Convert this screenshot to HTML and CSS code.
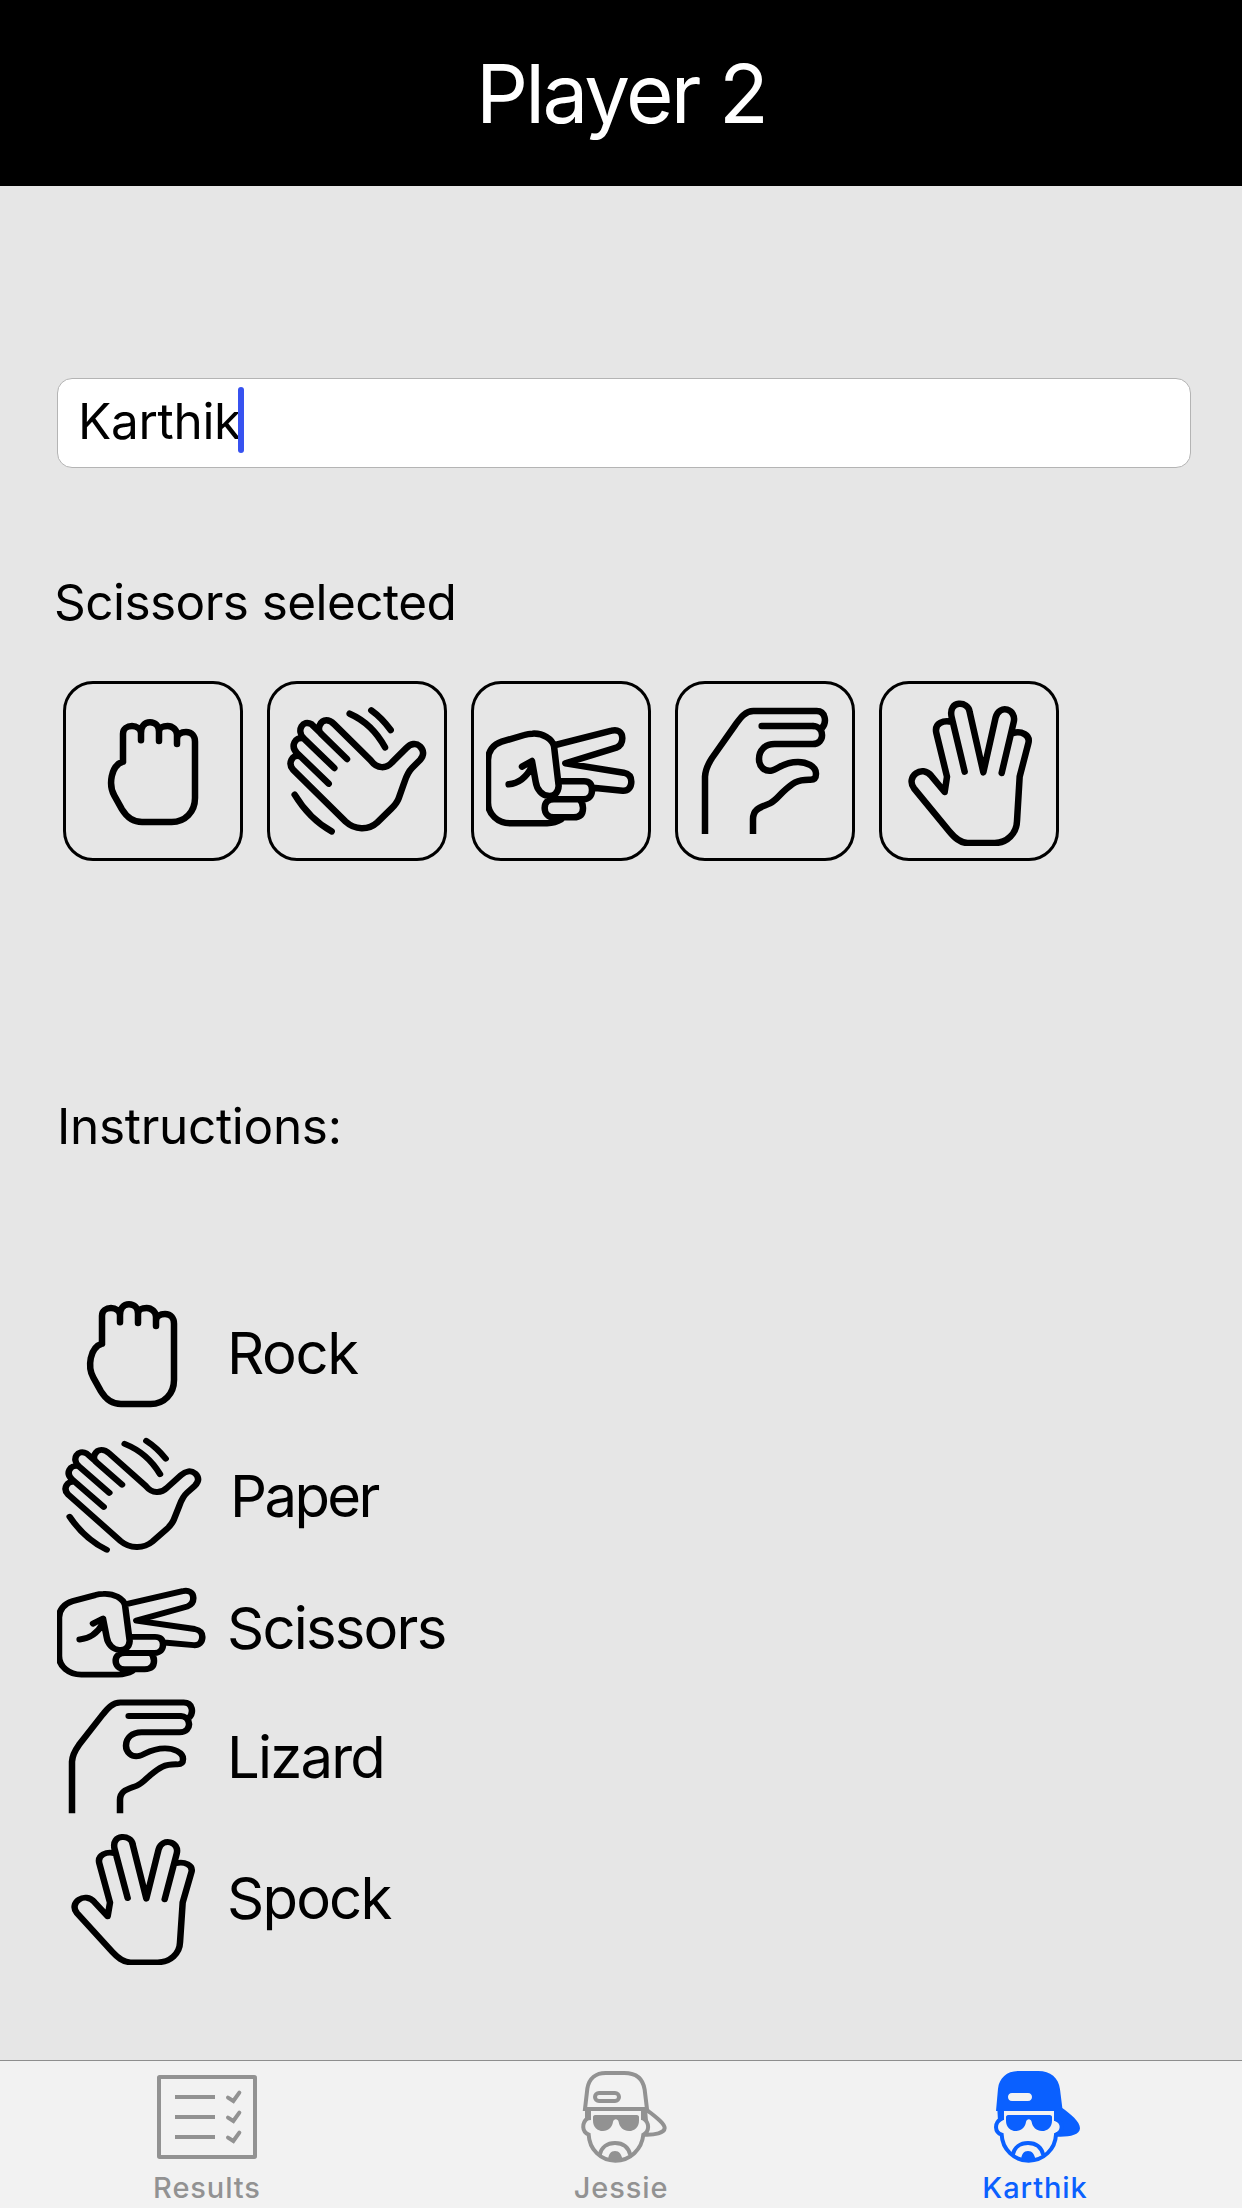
FILE: index.html
```html
<!DOCTYPE html>
<html lang="en">
<head>
<meta charset="utf-8">
<title>Player 2</title>
<link rel="stylesheet" href="styles.css">
</head>
<body>
<svg class="sprite" aria-hidden="true">
  <symbol id="rock" viewBox="84 78 450 450" preserveAspectRatio="none">
    <path d="M219 275V191C219 176 232 168 246 168S273 177 273 190V211V190C273 168 284 157 300 157S327 168 327 185V213V185C327 173 339 168 353 168S381 179 381 195V222V207C381 192 394 186 408 186C426 186 435 199 435 215V384C435 426 405 456 365 456H276C251 456 230 441 216 418L193 377C175 345 182 287 219 275"/>
  </symbol>
  <symbol id="paper" viewBox="66 78 450 450" preserveAspectRatio="none">
    <path d="M261 267L183 191C169 176 182 151 199 151C209 151 216 156 223 163L333 272C352 297 378 297 396 277L438 235C453 220 468 218 480 229C492 241 493 256 480 270L456 294C442 308 438 322 432 340L416 385C411 399 404 406 394 416L352 457C325 482 284 480 257 455L99 299C82 279 98 253 117 258M223 294L131 205C108 181 129 147 155 163L183 190M206 341L111 249C90 228 106 200 129 205M269 131Q337 161 375 232M334 121Q365 143 392 180M104 374Q149 448 215 484"/>
  </symbol>
  <symbol id="scissors" viewBox="66 78 450 450" preserveAspectRatio="none">
    <path d="M134 343Q178 339 203 291M174 290L204 273L215 335C222 387 282 392 284 348L270 228C264 207 238 189 205 191Q193 191 181 195L113 215C87 223 72 245 72 270V398C72 432 101 460 139 460H249Q274 459 292 448M274 225L443 182C460 177 475 185 475 205C475 219 470 228 457 233L304 280L479 308C494 311 502 321 502 335C502 352 492 363 476 362L387 353M287 334H360C375 334 384 342 384 360S374 388 359 388H270C250 388 242 399 242 414S252 442 269 442H329C348 442 357 432 357 414C357 402 354 394 346 388"/>
  </symbol>
  <symbol id="lizard" viewBox="66 78 450 450" preserveAspectRatio="none">
    <path class="open-end" d="M111 492V320C112 299 121 281 132 264L201 166C215 147 230 123 256 123H446C473 123 477 157 462 174"/>
    <path d="M281 168H434"/>
    <path class="open-end" d="M434 168C470 168 473 222 434 222H320C291 222 273 241 273 267C273 288 289 307 313 301C330 297 346 276 390 276C414 276 444 288 444 311C444 323 439 329 427 329C387 328 373 340 346 365C331 379 323 392 306 400C283 411 255 414 255 448V492"/>
  </symbol>
  <symbol id="spock" viewBox="66 78 450 450" preserveAspectRatio="none">
    <path d="M278 305L239 142C227 89 290 92 293 126L334 307L371 142C382 101 435 117 425 157L389 309M240 156C216 149 186 159 193 189L225 320L218 366L179 319C150 281 100 321 126 355L232 484C247 502 263 519 287 519H368C405 519 434 490 435 453L443 320L469 220C476 195 448 182 423 189"/>
  </symbol>
</svg>

<div class="screen">
  <header class="header"><h1 class="title">Player 2</h1></header>

  <main class="content">
    <div class="field"><span class="field-text">Karthik</span><span class="caret"></span></div>
    <p class="status">Scissors selected</p>
    <div class="moves">
      <button class="move" aria-label="Rock"><svg class="hand"><use href="#rock"/></svg></button>
      <button class="move" aria-label="Paper"><svg class="hand"><use href="#paper"/></svg></button>
      <button class="move" aria-label="Scissors"><svg class="hand"><use href="#scissors"/></svg></button>
      <button class="move" aria-label="Lizard"><svg class="hand"><use href="#lizard"/></svg></button>
      <button class="move" aria-label="Spock"><svg class="hand"><use href="#spock"/></svg></button>
    </div>
    <h2 class="instructions">Instructions:</h2>
    <ul class="legend">
      <li class="row"><svg class="hand"><use href="#rock"/></svg><span class="name name-rock">Rock</span></li>
      <li class="row row-paper"><svg class="hand hand-short"><use href="#paper"/></svg><span class="name name-paper">Paper</span></li>
      <li class="row row-scissors"><svg class="hand hand-short"><use href="#scissors"/></svg><span class="name name-scissors">Scissors</span></li>
      <li class="row row-lizard"><svg class="hand hand-short"><use href="#lizard"/></svg><span class="name name-lizard">Lizard</span></li>
      <li class="row row-spock"><svg class="hand hand-short"><use href="#spock"/></svg><span class="name name-spock">Spock</span></li>
    </ul>
  </main>

  <nav class="tabs">
    <a class="tab">
      <svg class="tab-icon" viewBox="-9 33 420 318">
        <rect x="57" y="81" width="288" height="240" rx="2" fill="none" stroke="currentColor" stroke-width="12"/>
        <path d="M105 141H225M105 201H225M105 261H225" fill="none" stroke="currentColor" stroke-width="12"/>
        <path d="M264 143L280 153L298 128M264 203L280 213L298 188M264 263L280 273L298 248" fill="none" stroke="currentColor" stroke-width="12" stroke-linecap="round"/>
      </svg>
      <span class="tab-label">Results</span>
    </a>
    <a class="tab">
      <svg class="tab-icon" viewBox="-27 33 420 318">
        <g fill="none" stroke="currentColor" stroke-width="12">
          <path d="M75 177L82 116C87 84 109 69 137 69H193C227 69 249 86 254 119L261 177Z"/>
          <rect x="105" y="129" width="72" height="24" rx="12"/>
          <path d="M82 182V205C65 219 65 245 86 254C88 298 122 332 166 332S246 298 250 254C269 244 269 219 251 206V182M262 181C287 201 314 220 314 234C313 249 285 255 254 254"/>
          <path d="M119 315C124 291 142 279 165 279S205 291 211 315"/>
        </g>
        <path d="M75 178H93V210L75 212ZM243 178H261L264 212L243 210ZM99 201C99 197 103 195 108 195H227C233 195 237 197 237 201V212C237 231 224 243 207 243C191 243 178 231 176 216C174 205 161 205 159 216C156 232 145 243 129 243C112 243 99 231 99 212ZM144 329C146 312 152 303 165 303S184 312 188 329Q166 337 144 329Z" fill="currentColor"/>
      </svg>
      <span class="tab-label">Jessie</span>
    </a>
    <a class="tab tab-active">
      <svg class="tab-icon" viewBox="-15 33 420 318">
        <path fill-rule="evenodd" d="M78 183L84 116C88 83 111 63 146 63H205C241 63 266 83 270 118L277 174C301 192 330 214 330 235C329 256 295 262 258 260L252 183ZM126 129C110 129 110 153 126 153H174C190 153 190 129 174 129Z" fill="currentColor"/>
        <path d="M252 182H276V242H252Z" fill="currentColor"/>
        <path class="face" d="M91 206H102V183H252V212C275 208 276 248 257 248C256 296 220 326 177 326S98 296 97 248C79 246 79 216 97 212Z"/>
        <g fill="none" stroke="currentColor" stroke-width="12">
          <path d="M92 182V208C73 219 73 247 95 254C97 298 132 332 176 332S256 298 258 254C280 245 281 217 258 208V182"/>
          <path d="M128 315C133 291 151 279 174 279S214 291 220 315"/>
        </g>
        <path d="M82 178H102V210L84 212ZM108 201C108 197 112 195 117 195H236C242 195 246 197 246 201V212C246 231 233 243 216 243C200 243 187 231 185 216C183 205 170 205 168 216C165 232 154 243 138 243C121 243 108 231 108 212ZM153 329C155 312 161 303 174 303S193 312 197 329Q175 337 153 329Z" fill="currentColor"/>
      </svg>
      <span class="tab-label">Karthik</span>
    </a>
  </nav>
</div>
</body>
</html>
```
FILE: styles.css
```css
* { box-sizing: border-box; }
body {
  margin: 0;
  background: #e6e6e6;
  color: #000;
  font-family: Inter, "Liberation Sans", sans-serif;
}
.sprite { display: none; }
.screen {
  width: 1242px;
  height: 2208px;
  display: flex;
  flex-direction: column;
}
.header {
  height: 186px;
  flex: none;
  background: #000;
  color: #fff;
  text-align: center;
}
.title {
  margin: 0;
  font-size: 81.6px;
  font-weight: 400;
  line-height: 188px;
  letter-spacing: -2.7px;
}
.content {
  flex: 1;
  padding: 192px 51px 0 57px;
}
.field {
  height: 90px;
  display: flex;
  align-items: center;
  padding: 0 20px 4px;
  background: #fff;
  border: 1px solid #b4b4b4;
  border-radius: 15px;
  font-size: 49.5px;
}
.field-text { letter-spacing: -0.3px; }
.caret {
  width: 6px;
  height: 66px;
  margin: 0 0 2px -3px;
  border-radius: 3px;
  background: #3752f0;
}
.status, .instructions {
  margin: 0;
  font-size: 49.5px;
  font-weight: 400;
  line-height: 60px;
}
.status {
  margin-top: 104px;
  margin-left: -3px;
  letter-spacing: -0.55px;
}
.moves {
  display: flex;
  gap: 24px;
  margin: 49px 0 0 6px;
}
.move {
  width: 180px;
  height: 180px;
  padding: 12px;
  border: 3px solid #000;
  border-radius: 30px;
  background: none;
  color: inherit;
}
.hand {
  display: block;
  flex: none;
  width: 150px;
  height: 150px;
  fill: none;
  stroke: #000;
  stroke-width: 19.5;
  stroke-linecap: round;
  stroke-linejoin: round;
}
.hand-short { height: 135px; }
.open-end { stroke-linecap: butt; }
.instructions {
  margin-top: 235px;
  letter-spacing: -0.3px;
}
.legend {
  margin: 122px 0 0;
  padding: 0;
  list-style: none;
}
.row {
  display: flex;
  align-items: center;
  gap: 20px;
  font-size: 58px;
}
.row-scissors { margin-top: -3px; }
.row-lizard { margin-top: -6px; }
.row-spock { margin-top: 6px; }
.name { line-height: 70px; letter-spacing: -1.8px; }
.name-rock { letter-spacing: -1.4px; }
.name-paper { margin-left: 3px; letter-spacing: -2.6px; }
.tabs {
  flex: none;
  height: 148px;
  display: grid;
  grid-template-columns: repeat(3, 1fr);
  border-top: 1px solid #8e8e8e;
  background: #f2f2f2;
}
.tab {
  display: flex;
  flex-direction: column;
  align-items: center;
  color: #929292;
}
.tab-active { color: #0a60ff; }
.tab-icon { display: block; width: 140px; height: 106px; }
.face { fill: #f2f2f2; }
.tab-label {
  font-size: 29px;
  font-weight: 500;
  line-height: 41px;
  letter-spacing: 0.9px;
}
```
